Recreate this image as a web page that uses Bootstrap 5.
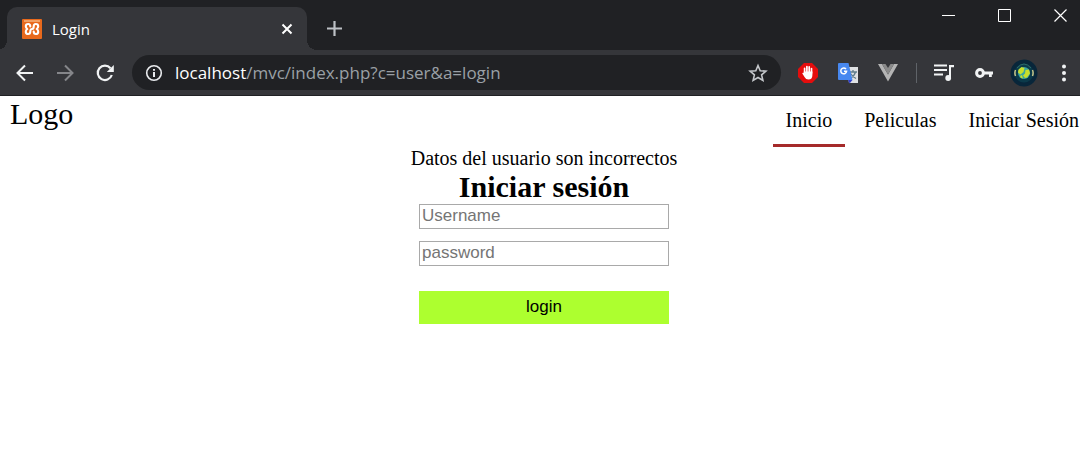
<!DOCTYPE html>
<html lang="es">
<head>
<meta charset="utf-8">
<meta name="viewport" content="width=device-width, initial-scale=1">
<title>Login</title>
<link href="https://cdn.jsdelivr.net/npm/bootstrap@5.3.0/dist/css/bootstrap.min.css" rel="stylesheet">
<style>
  body { font-family: "Liberation Serif", serif; font-size: 20px; line-height: 23px; color: #000; background: #fff; }
  .browser { font-family: "Open Sans", "Noto Sans", sans-serif; background: #202124; color: #fff; border-bottom: 1px solid #202124; }
  .browser button { border: 0; padding: 0; background: none; color: #f1f3f4; display: flex; align-items: center; justify-content: center; flex: none; }
  .browser svg { display: block; flex: none; }

  .tab-strip { height: 50px; padding-left: 7px; }
  .tab { position: relative; width: 300px; height: 43px; padding: 0 10px 0 15px; gap: 10px; background: #35363a; border-radius: 10px 10px 0 0; font-size: 15px; line-height: 20px; }
  .tab::before, .tab::after { content: ""; position: absolute; bottom: 0; width: 10px; height: 10px; }
  .tab::before { right: 100%; background: radial-gradient(circle at 0 0, #202124 10px, #35363a 10px); }
  .tab::after { left: 100%; background: radial-gradient(circle at 100% 0, #202124 10px, #35363a 10px); }
  .tab-action { width: 20px; height: 20px; }
  .new-tab { width: 55px; height: 43px; }
  .win-btn { width: 56px; height: 31px; }
  .win-btn:last-child { width: 48px; }

  .toolbar { height: 45px; padding-left: 5px; background: #35363a; }
  .tool { width: 40px; height: 40px; }
  .tool:last-child { width: 36px; }
  .browser .tool:disabled { color: #85868a; }
  .omnibox { height: 35px; margin: 0 7px; padding: 0 13px; gap: 12px; border-radius: 18px; background: #202124; font-size: 17px; line-height: 24px; }
  .url { color: #9aa0a6; outline: 0; white-space: nowrap; overflow: hidden; }
  .url span { color: #fff; }
  .divider { width: 1px; height: 20px; margin: 0 7px 0 8px; background: #5f6368; }

  .brand { font-size: 30px; line-height: 35px; padding-left: 10px; color: #000; text-decoration: none; }
  .site-nav { gap: 6px; }
  .site-nav .nav-link { padding: 13px 13px 12px; line-height: 23px; color: #000; border-bottom: 3px solid transparent; }
  .site-nav .nav-link.active { border-color: brown; }
  .site-nav .nav-item:last-child .nav-link { padding-right: 1px; }

  .login { padding-left: 8px; }
  .login h1 { font-size: 30px; line-height: 34px; font-weight: 700; margin: 0; }
  .login form { width: 250px; font-family: "Liberation Sans", sans-serif; font-size: 17px; }
  .field { width: 100%; height: 25px; padding: 0 2px 2px; border: 1px solid #a9a9a9; border-radius: 0; font-size: 17px; line-height: 20px; color: #000; margin-bottom: 12px; }
  .field::placeholder { color: #757575; opacity: 1; }
  .submit { width: 100%; height: 33px; margin-top: 13px; padding: 0 0 2px; border: 0; border-radius: 0; background: greenyellow; color: #000; font-size: 17px; line-height: 20px; }
</style>
<script src="https://cdn.jsdelivr.net/npm/bootstrap@5.3.0/dist/js/bootstrap.bundle.min.js"></script>
</head>
<body>

<header class="browser">
  <div class="tab-strip d-flex">
    <div class="tab d-flex align-items-center align-self-end">
      <svg width="20" height="20" viewBox="0 0 20 20"><rect width="20" height="20" rx="1" fill="#e8691c"/><path d="M2 1h16v2H2z" fill="#f2a064"/><path d="M8.300 7.500Q8.300 5 6.200 5 3.800 5 3.800 7.300 3.800 9 5.300 10 3.800 11 3.800 12.700 3.800 15 6.200 15 8.300 15 8.300 12.500 8.300 10 10 10 11.700 10 11.700 7.500 11.700 5 13.800 5 16.200 5 16.200 7.300 16.200 9 14.700 10 16.200 11 16.200 12.700 16.200 15 13.800 15 11.700 15 11.700 12.500" fill="none" stroke="#fff" stroke-width="2.100" stroke-linecap="round" stroke-linejoin="round"/></svg>
      <span class="flex-grow-1">Login</span>
      <button class="tab-action" type="button" aria-label="Cerrar pestaña"><svg width="12" height="12" viewBox="0 0 12 12" stroke="#fff" stroke-width="2"><path d="M1.500 1.500l9 9M10.500 1.500l-9 9"/></svg></button>
    </div>
    <button class="new-tab align-self-end" type="button" aria-label="Nueva pestaña"><svg width="15" height="15" viewBox="0 0 15 15" stroke="#bdc1c6" stroke-width="2.200"><path d="M7.500 0v15M0 7.500h15"/></svg></button>
    <div class="d-flex ms-auto">
      <button class="win-btn" type="button" aria-label="Minimizar"><svg width="13" height="13" viewBox="0 0 13 13"><path d="M0 6h13v1H0z" fill="#fff"/></svg></button>
      <button class="win-btn" type="button" aria-label="Maximizar"><svg width="13" height="13" viewBox="0 0 13 13"><path d="M.5.5h12v12H.5z" fill="none" stroke="#fff"/></svg></button>
      <button class="win-btn ps-2" type="button" aria-label="Cerrar"><svg width="13" height="13" viewBox="0 0 13 13"><path d="M.5.5l12 12M12.500.5l-12 12" stroke="#fff" stroke-width="1.200"/></svg></button>
    </div>
  </div>

  <div class="toolbar d-flex align-items-center">
    <button class="tool" type="button" aria-label="Atrás"><svg width="18" height="18" viewBox="0 0 18 18" fill="none" stroke="currentColor" stroke-width="2"><path d="M17 9H2M9 1.500L1.500 9 9 16.500"/></svg></button>
    <button class="tool" type="button" aria-label="Adelante" disabled><svg width="18" height="18" viewBox="0 0 18 18" fill="none" stroke="currentColor" stroke-width="2"><path d="M1 9h15M9 1.500L16.500 9 9 16.500"/></svg></button>
    <button class="tool" type="button" aria-label="Recargar"><svg width="18" height="18" viewBox="0 0 18 18"><path d="M15.800 11A7.200 7.200 0 1 1 14.500 4.200" fill="none" stroke="currentColor" stroke-width="2.200"/><path d="M17.800 1v7h-7z" fill="currentColor"/></svg></button>

    <div class="omnibox d-flex align-items-center flex-grow-1">
      <svg width="18" height="18" viewBox="0 0 18 18"><circle cx="9" cy="9" r="7.300" fill="none" stroke="#e8eaed" stroke-width="1.600"/><path d="M8 5h2v1.800H8zM8 8h2v5H8z" fill="#e8eaed"/></svg>
      <div class="url flex-grow-1" role="textbox" contenteditable="true" spellcheck="false" aria-label="Dirección"><span>localhost</span>/mvc/index.php?c=user&amp;a=login</div>
      <button type="button" aria-label="Añadir a marcadores"><svg width="20" height="20" viewBox="0 0 20 20"><path d="M10 2.500l2.200 5.200 5.700.5-4.300 3.700 1.300 5.500-4.900-2.900-4.900 2.900 1.300-5.500L2.100 8.200l5.700-.5z" fill="none" stroke="#c4c7cb" stroke-width="1.600"/></svg></button>
    </div>

    <button class="tool" type="button" aria-label="Bloqueador"><svg width="22" height="22" viewBox="0 0 22 22"><path d="M7 1h8l6 6v8l-6 6H7l-6-6V7z" fill="#e40d0d"/><path d="M7.600 11V6.300M9.900 10V4.600M12.200 10V4.900M14.500 11V6.500" stroke="#fff" stroke-width="1.700" stroke-linecap="round"/><path d="M6.800 9.500h8.600V13q0 4.500-4 4.500-2.600 0-3.700-2.300L5.300 11.500q.2-1.200 1.500-.5z" fill="#fff"/></svg></button>
    <button class="tool" type="button" aria-label="Traductor"><svg width="22" height="22" viewBox="0 0 22 22"><path d="M9 5h12v16h-9z" fill="#dfe1e3"/><path d="M12 10h8M16 8v2M18.500 10q-1 4-5 6M13.500 11.500q2 3 5.500 5" fill="none" stroke="#607d8b" stroke-width="1.300"/><path d="M2 1h9.500l4 17H2q-1 0-1-1V2q0-1 1-1z" fill="#4788f0"/><path d="M11 18h4.500L12.500 21.500z" fill="#3040c8"/><path d="M9 7.100A2.900 2.900 0 1 0 9.600 9.200H7" fill="none" stroke="#fff" stroke-width="1.500"/></svg></button>
    <button class="tool" type="button" aria-label="Vue"><svg width="20" height="18" viewBox="0 0 20 18"><path d="M0 0h4l6 10.500L16 0h4L10 17.500z" fill="#b4b4b4"/><path d="M4 0h3.500L10 4l2.500-4H16l-6 10.500z" fill="#8a8a8a"/></svg></button>
    <span class="divider"></span>
    <button class="tool" type="button" aria-label="Multimedia"><svg width="20" height="18" viewBox="0 0 20 18"><path d="M0 1.500h13M0 6h13M0 10.500h9" stroke="#f1f3f4" stroke-width="2.200"/><path d="M15 1h5v2.300h-3V14h-2z" fill="#f1f3f4"/><circle cx="14.200" cy="14" r="2.900" fill="#f1f3f4"/></svg></button>
    <button class="tool" type="button" aria-label="Contraseñas"><svg width="18" height="12" viewBox="0 0 18 12"><circle cx="5" cy="6" r="3.400" fill="none" stroke="#f1f3f4" stroke-width="3"/><path d="M9 4.500h9v3h-1.200V10H14V7.500H9z" fill="#f1f3f4"/></svg></button>
    <button class="tool" type="button" aria-label="Perfil"><svg width="28" height="28" viewBox="0 0 28 28"><circle cx="14" cy="14" r="13.500" fill="#08263a"/><circle cx="14" cy="14" r="9.500" fill="#0b3a4a"/><circle cx="14" cy="14" r="6" fill="#3aa6a0"/><path d="M8.500 10.500l3-2.500 3 1-1 4-3 2.500-2.500-2zM15.500 11l3.500-.5 1 4-3 4-2 .5-2-2.500 2-2zM10 17l2-1 1 3.500-2-.5z" fill="#c9df2c"/><path d="M5.500 11q-1.200 3 0 6M22.500 11q1.200 3 0 6" fill="none" stroke="#c8c88a" stroke-width="1.500"/><path d="M7 9q7-8 14 0" fill="none" stroke="#2c6d6a" stroke-width="1"/></svg></button>
    <button class="tool ps-1" type="button" aria-label="Menú"><svg width="4" height="18" viewBox="0 0 4 18" fill="#f1f3f4"><circle cx="2" cy="2.500" r="2"/><circle cx="2" cy="9" r="2"/><circle cx="2" cy="15.500" r="2"/></svg></button>
  </div>
</header>

<nav class="d-flex justify-content-between align-items-start">
  <a class="brand" href="#">Logo</a>
  <ul class="site-nav nav">
    <li class="nav-item"><a class="nav-link active" href="#" aria-current="page">Inicio</a></li>
    <li class="nav-item"><a class="nav-link" href="#">Peliculas</a></li>
    <li class="nav-item"><a class="nav-link" href="#">Iniciar Sesión</a></li>
  </ul>
</nav>

<main class="login d-flex flex-column align-items-center text-center">
  <p class="mb-0">Datos del usuario son incorrectos</p>
  <h1>Iniciar sesión</h1>
  <form class="d-flex flex-column">
    <input class="field" type="text" name="username" placeholder="Username" aria-label="Username">
    <input class="field" type="password" name="password" placeholder="password" aria-label="password">
    <button class="submit" type="submit">login</button>
  </form>
</main>

</body>
</html>
